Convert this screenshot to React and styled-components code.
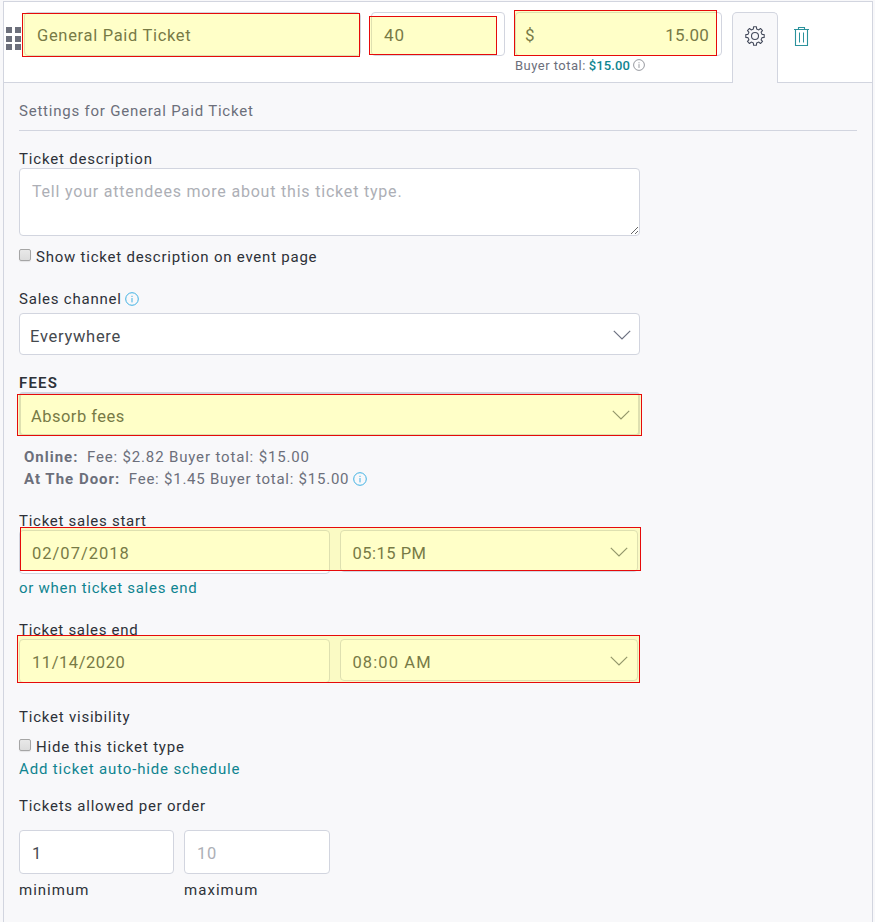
import React from 'react';
import styled, { createGlobalStyle } from 'styled-components';

const GlobalStyle = createGlobalStyle`
  *, *::before, *::after { box-sizing: border-box; }
  body { margin: 0; background: #f8f8fa; font-family: Roboto, "Liberation Sans", sans-serif; }
  svg { display: block; flex: none; }
`;

const LINE = '#d2d5df';

const Card = styled.main`
  width: 870px;
  height: 921px;
  margin: 1px 0 0 3px;
  border: 1px solid ${LINE};
  border-bottom: 0;
  background: #f8f8fa;
  overflow: hidden;
`;

const Header = styled.header`
  display: flex;
  align-items: flex-start;
  height: 81px;
  padding: 10px 0 0 2px;
  background: #fff;
  border-bottom: 1px solid ${LINE};
`;

const DragHandle = styled.div`
  display: grid;
  grid-template-columns: repeat(2, 6px);
  gap: 2.5px 3px;
  width: 18px;
  padding-top: 15px;

  i {
    height: 6px;
    background: #6c6f7b;
  }
`;

const FieldSlot = styled.div`
  position: relative;
  width: ${(p) => p.$width}px;
  margin-left: ${(p) => p.$gap || 0}px;
  flex: none;
`;

const Field = styled.div`
  display: flex;
  align-items: center;
  justify-content: space-between;
  width: ${(p) => (p.$width ? `${p.$width}px` : '100%')};
  height: ${(p) => p.$height || 44}px;
  padding: ${(p) => p.$pad || '2px 12px 0'};
  flex: none;
  background: #fff;
  border: ${(p) => p.$border || '1px'} solid ${LINE};
  border-radius: 4px;
  color: ${(p) => (p.$muted ? '#adafb6' : '#45494e')};
  font-size: ${(p) => p.$size || 16.5}px;
  letter-spacing: ${(p) => p.$ls ?? 0.75}px;
`;

const SelectField = styled(Field)`
  svg { margin-top: -2px; }
`;

const Highlight = styled.div`
  position: absolute;
  top: ${(p) => p.$box[0]}px;
  right: ${(p) => p.$box[1]}px;
  bottom: ${(p) => p.$box[2]}px;
  left: ${(p) => p.$box[3]}px;
  border: 1px solid #e60a0a;
  background: rgba(255, 255, 50, 0.27);
  pointer-events: none;
`;

const BuyerTotal = styled.div`
  display: flex;
  align-items: center;
  height: 18px;
  color: #6c6f7b;
  font-size: 13px;
  letter-spacing: 0.48px;

  strong {
    margin: 0 3px 0 3px;
    color: #0f8490;
    font-weight: 500;
    letter-spacing: 0.12px;
  }
`;

const Tab = styled.div`
  display: flex;
  justify-content: center;
  width: 46px;
  height: 71px;
  margin-left: 10px;
  padding-top: 13px;
  background: #f8f8fa;
  border: 1px solid ${LINE};
  border-bottom: 0;
  border-radius: 5px 5px 0 0;
`;

const DeleteButton = styled.div`
  padding: 14px 0 0 15px;
`;

const Panel = styled.section`
  padding: 0 15px;
`;

const PanelTitle = styled.h2`
  height: 48px;
  margin: 0;
  padding-top: 18px;
  border-bottom: 1px solid ${LINE};
  color: #6c6f7b;
  font-size: 15px;
  font-weight: 400;
  line-height: 20px;
  letter-spacing: 0.78px;
`;

const Group = styled.div`
  width: 621px;
  margin-top: ${(p) => p.$top}px;
`;

const Label = styled.div`
  display: flex;
  align-items: center;
  gap: 3px;
  height: ${(p) => p.$height || 20}px;
  color: #2d3138;
  font-size: 15px;
  font-weight: ${(p) => (p.$strong ? 600 : 400)};
  letter-spacing: ${(p) => p.$ls ?? 0.78}px;
`;

const TextArea = styled.textarea`
  display: block;
  width: 621px;
  height: 68px;
  padding: 12px;
  border: 1px solid ${LINE};
  border-radius: 4px;
  outline: 0;
  background: #fff;
  font: 16px/21px Roboto, sans-serif;
  letter-spacing: 0.8px;
  resize: vertical;

  &::placeholder { color: #adafb6; }
`;

const CheckRow = styled.div`
  display: flex;
  align-items: center;
  gap: 5px;
  height: 22px;
  color: #2d3138;
  font-size: 15px;
  letter-spacing: ${(p) => p.$ls ?? 0.77}px;
`;

const CheckBox = styled.span`
  width: 12px;
  height: 12px;
  margin-top: -4px;
  border: 1px solid #a5a5a5;
  border-radius: 2px;
  background: linear-gradient(#e8e8e8, #dcdcdc);
  box-shadow: 0 1px 1px rgba(0, 0, 0, 0.08);
`;

const LinkText = styled.div`
  height: 22px;
  color: #0f8490;
  font-size: 15px;
  line-height: 22px;
  letter-spacing: ${(p) => p.$ls}px;
`;

const FeeLine = styled.div`
  display: flex;
  align-items: center;
  height: 22px;
  padding-left: 5px;
  color: #6c6f7b;
  font-size: 15px;
  letter-spacing: ${(p) => p.$ls}px;

  b {
    margin-right: 8.5px;
    letter-spacing: 1px;
  }
  svg { margin-left: 4px; }
`;

const Row = styled.div`
  position: relative;
  display: flex;
  align-items: flex-start;
  gap: 10px;
`;

const Chevron = () => (
  <svg width="18" height="10" viewBox="0 0 18 10" fill="none" stroke="#6c7180" strokeWidth="1.2">
    <path d="M0.8 0.8 L9 9 L17.2 0.8" />
  </svg>
);

const Info = ({ size = 14, color = '#3fb1e3' }) => (
  <svg width={size} height={size} viewBox="0 0 14 14" fill="none" stroke={color}>
    <circle cx="7" cy="7" r="6.3" strokeWidth="1" />
    <path d="M7 6v4.4M7 3.8v1.2" strokeWidth="1" />
  </svg>
);

// Eight teeth: each one spans from the root radius out to the tip and back.
const GEAR_PATH = (() => {
  const point = (radius, degrees) => {
    const a = (degrees * Math.PI) / 180;
    return `${(10 + radius * Math.cos(a)).toFixed(2)} ${(10 + radius * Math.sin(a)).toFixed(2)}`;
  };
  const points = [];
  for (let tooth = 0; tooth < 8; tooth += 1) {
    const c = tooth * 45;
    points.push(point(7.2, c - 13), point(9.3, c - 9), point(9.3, c + 9), point(7.2, c + 13));
  }
  return `M${points.join('L')}Z`;
})();

const Gear = () => (
  <svg width="20" height="20" viewBox="0 0 20 20" fill="none" stroke="#454b5c" strokeWidth="1.1" strokeLinejoin="round">
    <path d={GEAR_PATH} />
    <circle cx="10" cy="10" r="3.5" />
  </svg>
);

const Trash = () => (
  <svg width="17" height="21" viewBox="0 0 17 21" fill="none" stroke="#2b929c">
    <path d="M1 3.5h15M5.5 3.5V1.5h6v2M2.5 3.5v16h12v-16" strokeWidth="1.1" />
    <path d="M6.5 6.5v10M10.5 6.5v10" strokeWidth="1" />
  </svg>
);

export default function App() {
  return (
    <>
      <GlobalStyle />
      <Card>
        <Header>
          <DragHandle>
            <i /><i /><i /><i /><i /><i />
          </DragHandle>
          <FieldSlot $width={337}>
            <Field $ls={0.68}>General Paid Ticket</Field>
            <Highlight $box={[1, 1, -1, -2]} />
          </FieldSlot>
          <FieldSlot $width={134} $gap={10}>
            <Field $size={17} $ls={0.9}>40</Field>
            <Highlight $box={[4, 8, 1, -2]} />
          </FieldSlot>
          <FieldSlot $width={207} $gap={10}>
            <Field $size={17} $ls={0.2} $pad="2px 12px 0 9px">
              <span>$</span>
              <span>15.00</span>
            </Field>
            <BuyerTotal>
              Buyer total: <strong>$15.00</strong>
              <Info size={12} color="#85888f" />
            </BuyerTotal>
            <Highlight $box={[-2, 5, 18, -1]} />
          </FieldSlot>
          <Tab><Gear /></Tab>
          <DeleteButton><Trash /></DeleteButton>
        </Header>

        <Panel>
          <PanelTitle>Settings for General Paid Ticket</PanelTitle>

          <Group $top={18}>
            <Label $height={19} $ls={0.82}>Ticket description</Label>
            <TextArea placeholder="Tell your attendees more about this ticket type." />
          </Group>
          <Group $top={10}>
            <CheckRow><CheckBox />Show ticket description on event page</CheckRow>
          </Group>

          <Group $top={20}>
            <Label $height={22} $ls={0.78}>Sales channel<Info /></Label>
          </Group>
          <Group $top={3}>
            <SelectField $height={42} $pad="4px 8px 0 10px" $ls={0.72}>Everywhere<Chevron /></SelectField>
          </Group>

          <Group $top={18}>
            <Label $height={19} $strong $ls={1.2}>FEES</Label>
            <Row>
              <SelectField $height={44} $border="2px" $pad="4px 8px 0 10px" $ls={0.48}>Absorb fees<Chevron /></SelectField>
              <Highlight $box={[2, -2, 0, -2]} />
            </Row>
          </Group>
          <Group $top={10}>
            <FeeLine $ls={0.84}><b>Online:</b>Fee: $2.82 Buyer total: $15.00</FeeLine>
            <FeeLine $ls={0.76}><b>At The Door:</b>Fee: $1.45 Buyer total: $15.00<Info /></FeeLine>
          </Group>

          <Group $top={20}>
            <Label $height={21} $ls={0.73}>Ticket sales start</Label>
          </Group>
          <Group $top={-1}>
            <Row>
              <Field $width={311} $ls={1}>02/07/2018</Field>
              <SelectField $width={298} $height={42} $pad="4px 9px 0 11.5px" $ls={0.5}>05:15 PM<Chevron /></SelectField>
              <Highlight $box={[-3, -1, 3, 1]} />
            </Row>
          </Group>
          <Group $top={3}>
            <LinkText $ls={0.73}>or when ticket sales end</LinkText>
          </Group>

          <Group $top={20}>
            <Label $height={21} $ls={0.7}>Ticket sales end</Label>
          </Group>
          <Group $top={-1}>
            <Row>
              <Field $width={311} $ls={0.55}>11/14/2020</Field>
              <SelectField $width={298} $height={42} $pad="4px 9px 0 11.5px" $ls={1.1}>08:00 AM<Chevron /></SelectField>
              <Highlight $box={[-4, 0, 0, -2]} />
            </Row>
          </Group>

          <Group $top={24}>
            <Label>Ticket visibility</Label>
          </Group>
          <Group $top={9}>
            <CheckRow $ls={0.82}><CheckBox />Hide this ticket type</CheckRow>
            <LinkText $ls={0.84}>Add ticket auto-hide schedule</LinkText>
          </Group>

          <Group $top={16}>
            <Label $ls={0.76}>Tickets allowed per order</Label>
          </Group>
          <Group $top={14}>
            <Row>
              <FieldSlot $width={155}>
                <Field>1</Field>
                <Label $height={32} $ls={1}>minimum</Label>
              </FieldSlot>
              <FieldSlot $width={146}>
                <Field $muted>10</Field>
                <Label $height={32} $ls={1.05}>maximum</Label>
              </FieldSlot>
            </Row>
          </Group>
        </Panel>
      </Card>
    </>
  );
}
